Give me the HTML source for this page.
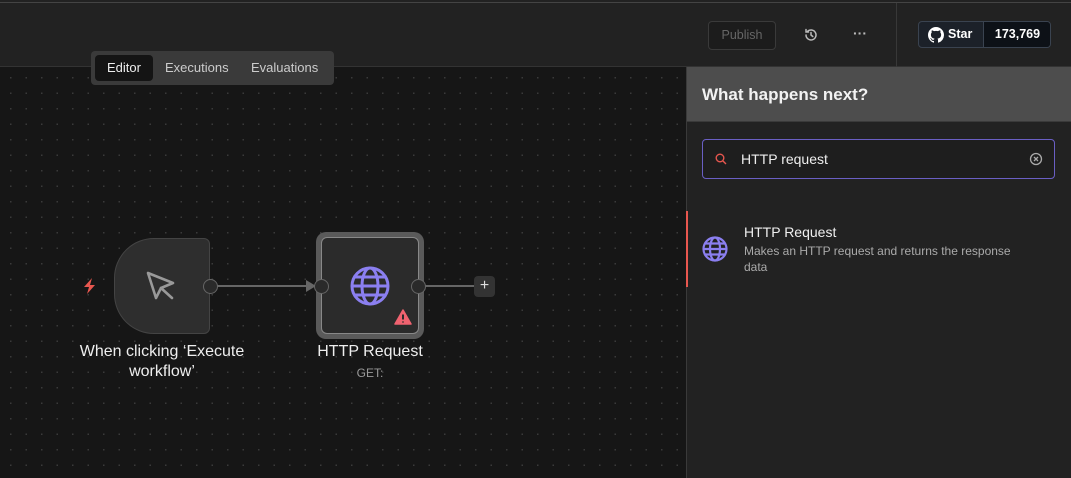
<!DOCTYPE html>
<html><head><style>
*{margin:0;padding:0;box-sizing:border-box}
body{width:1071px;height:478px;overflow:hidden;background:#161616;font-family:"Liberation Sans",sans-serif;position:relative;color:#ddd}
.abs{position:absolute}
#hdr{left:0;top:0;width:1071px;height:67px;background:#222;border-bottom:1px solid #333}
#topline{left:0;top:2px;width:1071px;height:1px;background:#444}
#canvas{left:0;top:68px;width:686px;height:410px;background-color:#161616;background-image:radial-gradient(circle,#3a3a3a 0.8px,transparent 1px);background-size:15.5px 15.5px;background-position:3px 2px}
.t{font-size:13px;color:#ccc}
</style></head><body>
<div id="canvas" class="abs"></div>
<div id="hdr" class="abs"></div>
<div id="topline" class="abs"></div>
<div class="abs" style="left:896px;top:3px;width:1px;height:64px;background:#383838"></div>
<div class="abs" style="left:708px;top:21px;width:68px;height:29px;border:1px solid #3a3a3a;border-radius:4px;background:#1c1c1c;color:#666;font-size:12.5px;text-align:center;line-height:27px">Publish</div>
<svg class="abs" style="left:803px;top:27px" width="16" height="16" viewBox="0 0 16 16" fill="none" stroke="#bbb" stroke-width="1.5" stroke-linecap="round"><path d="M3 8a5 5 0 1 0 1.5-3.6M3 2.5v2.5h2.5M8 5.5V8l1.8 1.5"/></svg>
<div class="abs" style="left:853px;top:25px;color:#bbb;font-size:14px;font-weight:bold">···</div>
<div class="abs" style="left:918px;top:21px;width:133px;height:27px;border:1px solid #3a4350;border-radius:4px;background:#1c2129;overflow:hidden">
<div class="abs" style="left:64px;top:0;width:68px;height:27px;background:#0d1117;border-left:1px solid #3a4350;color:#fff;font-size:12.5px;font-weight:bold;text-align:center;line-height:25px">173,769</div>
<svg class="abs" style="left:9px;top:5px" width="16" height="16" viewBox="0 0 16 16"><path fill="#fff" d="M8 0C3.58 0 0 3.58 0 8c0 3.54 2.29 6.53 5.47 7.590.4.07.55-.17.55-.38v-1.33c-2.230.48-2.7-1.07-2.7-1.07-.36-.93-.89-1.170-.89-1.170-.73-.5.06-.49.06-.49.8.06 1.23.83 1.23.83.72 1.23 1.88.87 2.34.67.07-.52.28-.87.5-1.07-1.78-.2-3.64-.89-3.64-3.95 0-.87.31-1.59.82-2.15-.08-.2-.36-1.020.08-2.12 0 0 .67-.21 2.2.82a7.6 7.6 0 014 0c1.53-1.04 2.2-.82 2.2-.82.44 1.1.16 1.920.08 2.12.51.56.82 1.27.82 2.15 0 3.07-1.87 3.75-3.65 3.95.29.25.54.73.54 1.48v2.2c0 .21.15.46.55.38A8.01 8.01 0 0016 8c0-4.42-3.58-8-8-8z"/></svg>
<div class="abs" style="left:29px;top:0;color:#fff;font-size:12.5px;font-weight:bold;line-height:25px">Star</div>
</div>
<div class="abs" style="left:91px;top:51px;width:243px;height:34px;background:#3a3a3a;border-radius:4px"></div>
<div class="abs" style="left:95px;top:55px;width:58px;height:26px;background:#141414;border-radius:4px"></div>
<div class="abs t" style="left:107px;top:60px;color:#eee">Editor</div>
<div class="abs t" style="left:165px;top:60px">Executions</div>
<div class="abs t" style="left:251px;top:60px">Evaluations</div>
<div class="abs" style="left:217px;top:285px;width:92px;height:2px;background:#666"></div>
<svg class="abs" style="left:306px;top:280px" width="10" height="12"><path d="M0 0L10 6L0 12z" fill="#666"/></svg>
<div class="abs" style="left:425px;top:285px;width:50px;height:2px;background:#666"></div>
<div class="abs" style="left:474px;top:276px;width:21px;height:21px;background:#333;border-radius:4px;color:#ddd;font-size:16px;text-align:center;line-height:20px">+</div>
<div class="abs" style="left:114px;top:238px;width:96px;height:96px;background:#2e2e2e;border:1px solid #444;border-radius:40px 6px 6px 40px"></div>
<svg class="abs" style="left:143px;top:268px" width="36" height="36" viewBox="0 0 36 36" fill="none" stroke="#999" stroke-width="2.6" stroke-linejoin="round" stroke-linecap="round"><path d="M5 5L13 30L18 20L30 15Z"/><path d="M18 20L29 30"/></svg>
<svg class="abs" style="left:82px;top:277px" width="16" height="18" viewBox="0 0 16 18"><path d="M10 1L2 10h5l-2 7 8-9H8z" fill="#e8574f"/></svg>
<div class="abs" style="left:203px;top:279px;width:15px;height:15px;border-radius:50%;background:#2a2a2a;border:1px solid #666"></div>
<div class="abs" style="left:316px;top:232px;width:108px;height:107px;background:#5a5a5a;border-radius:10px"></div>
<div class="abs" style="left:321px;top:237px;width:98px;height:97px;background:#2b2b2b;border:1px solid #888;border-radius:6px"></div>
<svg class="abs" style="left:349px;top:265px" width="42" height="42" viewBox="0 0 42 42" fill="none" stroke="#8b7ff0" stroke-width="3"><circle cx="21" cy="21" r="18"/><ellipse cx="21" cy="21" rx="8" ry="18"/><path d="M3 21h36M6 12h30M6 30h30"/></svg>
<svg class="abs" style="left:394px;top:309px" width="18" height="16" viewBox="0 0 18 16"><path d="M9 1L17 15H1z" fill="#f06370" stroke="#f06370" stroke-linejoin="round" stroke-width="1.5"/><path d="M9 5.5v5M9 12.5v1" stroke="#2b2b2b" stroke-width="2"/></svg>
<div class="abs" style="left:314px;top:279px;width:15px;height:15px;border-radius:50%;background:#2a2a2a;border:1px solid #666"></div>
<div class="abs" style="left:411px;top:279px;width:15px;height:15px;border-radius:50%;background:#2a2a2a;border:1px solid #666"></div>
<div class="abs" style="left:40px;top:342px;width:244px;text-align:center;font-size:16px;color:#eee;line-height:20px">When clicking ‘Execute<br>workflow’</div>
<div class="abs" style="left:300px;top:342px;width:140px;text-align:center;font-size:16px;color:#eee;line-height:20px">HTTP Request</div>
<div class="abs" style="left:300px;top:366px;width:140px;text-align:center;font-size:12px;color:#999">GET:</div>
<div class="abs" style="left:686px;top:67px;width:385px;height:411px;background:#222;border-left:1px solid #3a3a3a"></div>
<div class="abs" style="left:687px;top:67px;width:384px;height:55px;background:#4d4d4d;border-bottom:1px solid #3a3a3a"></div>
<div class="abs" style="left:702px;top:85px;font-size:17px;font-weight:bold;color:#f2f2f2">What happens next?</div>
<div class="abs" style="left:702px;top:139px;width:353px;height:40px;border:1px solid #6a5fc4;border-radius:4px;background:#1e1e1e"></div>
<svg class="abs" style="left:715px;top:153px" width="12" height="12" viewBox="0 0 12 12" fill="none" stroke="#e8574f" stroke-width="1.4"><circle cx="5" cy="5" r="3.8"/><path d="M8 8l3 3"/></svg>
<div class="abs" style="left:741px;top:151px;font-size:14px;color:#eee">HTTP request</div>
<svg class="abs" style="left:1029px;top:152px" width="14" height="14" viewBox="0 0 14 14" fill="none" stroke="#aaa" stroke-width="1.3"><circle cx="7" cy="7" r="5.5"/><path d="M5 5l4 4M9 5l-4 4"/></svg>
<div class="abs" style="left:686px;top:211px;width:2px;height:76px;background:#e8574f"></div>
<svg class="abs" style="left:702px;top:236px" width="26" height="26" viewBox="0 0 26 26" fill="none" stroke="#8b7ff0" stroke-width="2.2"><circle cx="13" cy="13" r="11.5"/><ellipse cx="13" cy="13" rx="5" ry="11.5"/><path d="M1.5 13h23M3 7.5h20M3 18.5h20"/></svg>
<div class="abs" style="left:744px;top:224px;font-size:14px;color:#eee">HTTP Request</div>
<div class="abs" style="left:744px;top:243px;font-size:12px;color:#aaa;line-height:16px;width:300px">Makes an HTTP request and returns the response<br>data</div>
</body></html>
